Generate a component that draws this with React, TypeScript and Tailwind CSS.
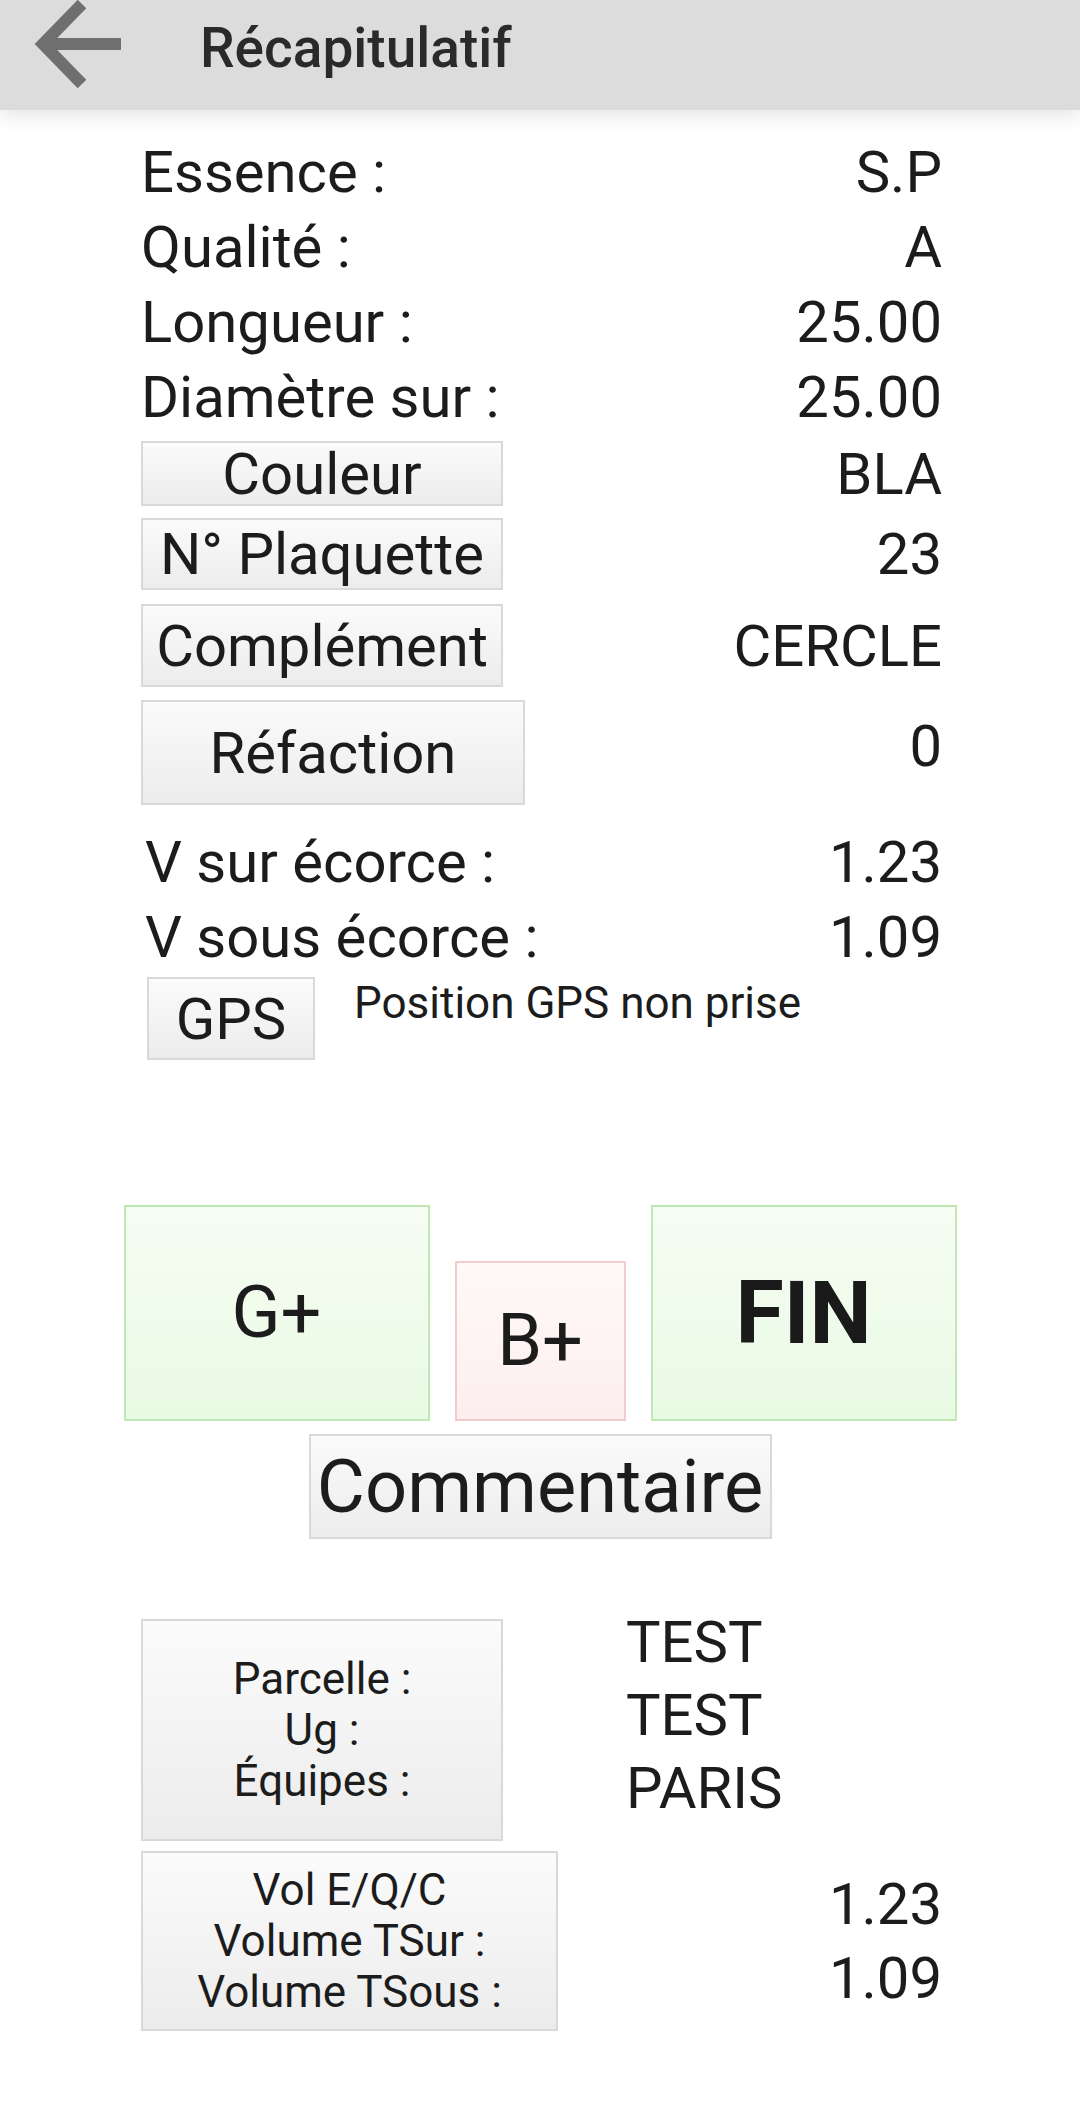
const grayBtn =
  "flex items-center justify-center border-2 border-[#d9d9d9] bg-linear-to-b from-[#fbfbfb] to-[#ececec] text-[#1c1c1c]";

function BackArrow() {
  return (
    <svg width="130" height="110" viewBox="0 0 130 110" className="block">
      <path
        d="M82 4 L43 44 L82 84 M45 44 L121 44"
        fill="none"
        stroke="#6f6f6f"
        strokeWidth="12"
        strokeLinecap="butt"
        strokeLinejoin="miter"
      />
    </svg>
  );
}

function Row({ label, value }: { label: string; value: string }) {
  return (
    <div className="flex h-[75px] items-center justify-between">
      <span>{label}</span>
      <span>{value}</span>
    </div>
  );
}

function ButtonRow({
  label,
  value,
  className,
}: {
  label: string;
  value: string;
  className: string;
}) {
  return (
    <div className={`flex items-center justify-between ${className}`}>
      <div className={`${grayBtn} w-[362px] self-stretch`}>{label}</div>
      <span>{value}</span>
    </div>
  );
}

export default function App() {
  return (
    <div
      className="min-h-[2127px] w-[1080px] bg-white text-[58px] leading-none text-[#1c1c1c]"
      style={{ fontFamily: "Roboto, 'Noto Sans', sans-serif" }}
    >
      {/* header */}
      <div className="relative flex h-[110px] items-center bg-[#dcdcdc] shadow-[0_8px_16px_rgba(0,0,0,0.09)]">
        <div className="self-start">
          <BackArrow />
        </div>
        <h1 className="ml-[70px] -mt-[14px] text-[55px] font-medium text-[#2a2a2a]">Récapitulatif</h1>
      </div>

      <div className="pl-[141px] pr-[138px] pt-[24px]">
        <Row label="Essence :" value="S.P" />
        <Row label="Qualité :" value="A" />
        <Row label="Longueur :" value="25.00" />
        <Row label="Diamètre sur :" value="25.00" />

        <ButtonRow label="Couleur" value="BLA" className="mt-[7px] h-[65px]" />
        <ButtonRow label="N° Plaquette" value="23" className="mt-[12px] h-[72px]" />
        <ButtonRow label="Complément" value="CERCLE" className="mt-[14px] h-[83px]" />

        <div className="mt-[13px] flex h-[105px] items-center justify-between">
          <div className={`${grayBtn} h-full w-[384px]`}>Réfaction</div>
          <span className="mb-[14px]">0</span>
        </div>

        <div className="mt-[19px] pl-[4px]">
          <Row label="V sur écorce :" value="1.23" />
          <Row label="V sous écorce :" value="1.09" />
        </div>

        <div className="mt-[3px] flex items-start pl-[6px]">
          <div className={`${grayBtn} h-[83px] w-[168px]`}>GPS</div>
          <span className="ml-[39px] text-[44px] leading-[52px]">Position GPS non prise</span>
        </div>
      </div>

      {/* action buttons */}
      <div className="mt-[145px] flex items-end justify-center gap-[25px]">
        <div className="flex h-[216px] w-[306px] items-center justify-center border-2 border-[#bfe8b5] bg-linear-to-b from-[#f6fdf3] to-[#e9fae4] text-[72px]">
          G+
        </div>
        <div className="flex h-[160px] w-[171px] items-center justify-center border-2 border-[#f2cccc] bg-linear-to-b from-[#fff9f9] to-[#fdeeee] text-[72px]">
          B+
        </div>
        <div className="flex h-[216px] w-[306px] items-center justify-center border-2 border-[#bfe8b5] bg-linear-to-b from-[#f6fdf3] to-[#e9fae4] text-[88px] font-bold text-[#1a1a1a]">
          FIN
        </div>
      </div>

      <div className="mt-[13px] flex justify-center">
        <div className={`${grayBtn} h-[105px] w-[463px] text-[74px]`}>Commentaire</div>
      </div>

      {/* summary */}
      <div className="mt-[67px] pl-[141px] pr-[138px]">
        <div className="flex items-start">
          <div
            className={`${grayBtn} mt-[13px] h-[222px] w-[362px] flex-col text-center text-[44px] leading-[51px]`}
          >
            <span>Parcelle :</span>
            <span>Ug :</span>
            <span>Équipes :</span>
          </div>
          <div className="ml-[123px] flex flex-col leading-[73px]">
            <span>TEST</span>
            <span>TEST</span>
            <span>PARIS</span>
          </div>
        </div>

        <div className="mt-[10px] flex items-center justify-between">
          <div
            className={`${grayBtn} h-[180px] w-[417px] flex-col text-center text-[44px] leading-[51px]`}
          >
            <span>Vol E/Q/C</span>
            <span>Volume TSur :</span>
            <span>Volume TSous :</span>
          </div>
          <div className="flex flex-col items-end leading-[74px]">
            <span>1.23</span>
            <span>1.09</span>
          </div>
        </div>
      </div>
    </div>
  );
}
